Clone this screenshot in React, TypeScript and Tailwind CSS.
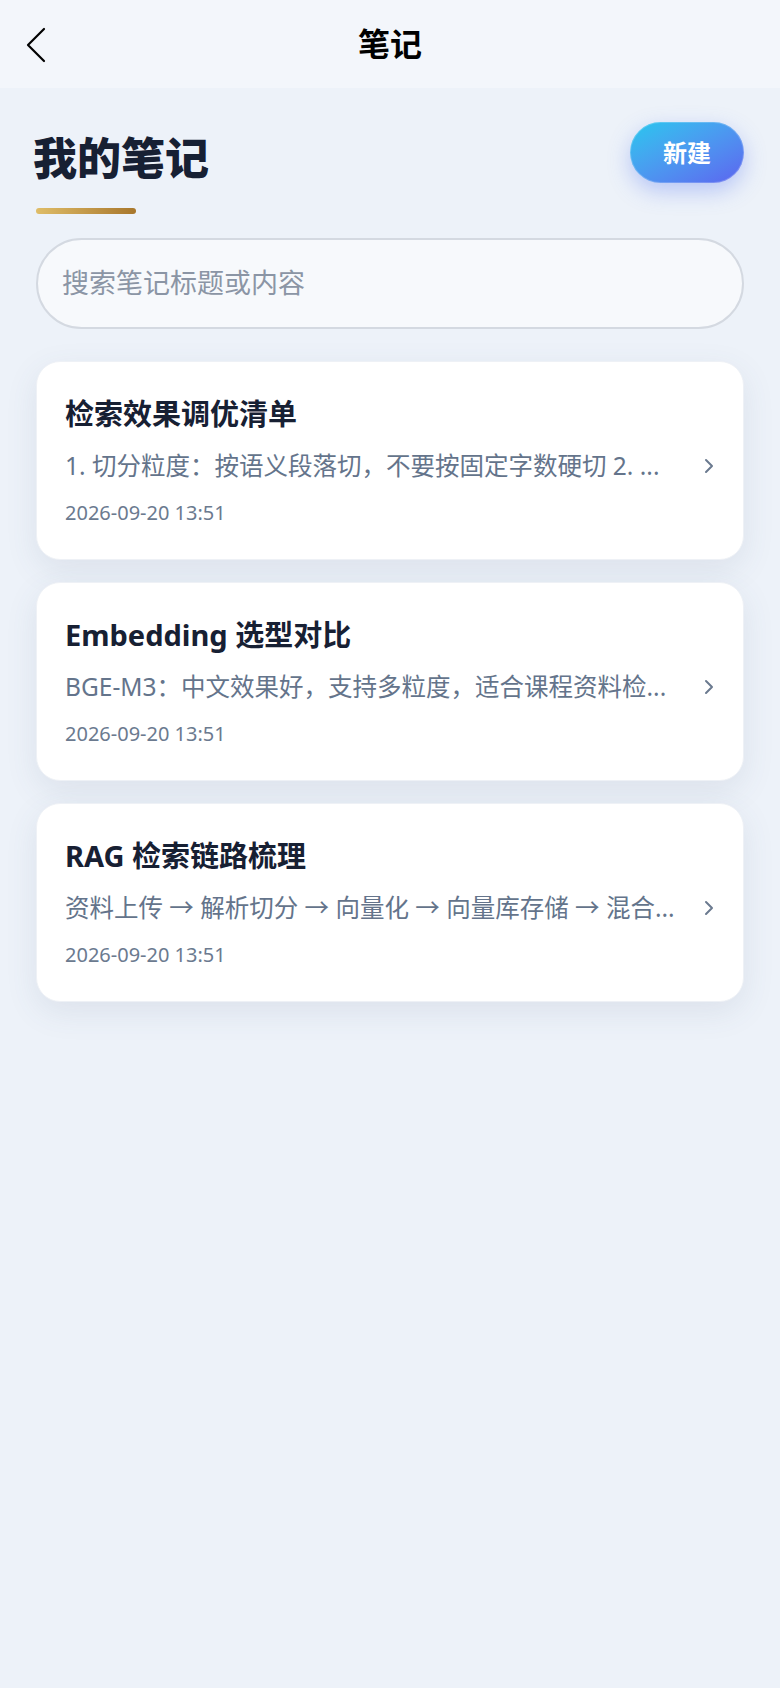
const notes = [
  {
    id: 1,
    title: "检索效果调优清单",
    preview: "1. 切分粒度：按语义段落切，不要按固定字数硬切 2. ...",
    time: "2026-09-20 13:51",
  },
  {
    id: 2,
    title: "Embedding 选型对比",
    preview: "BGE-M3：中文效果好，支持多粒度，适合课程资料检...",
    time: "2026-09-20 13:51",
  },
  {
    id: 3,
    title: "RAG 检索链路梳理",
    preview: "资料上传 → 解析切分 → 向量化 → 向量库存储 → 混合...",
    time: "2026-09-20 13:51",
  },
];

function BackIcon() {
  return (
    <svg width="22" height="36" viewBox="0 0 22 36" fill="none">
      <path d="M19 2 L3 18 L19 34" stroke="#000" strokeWidth="2.2" strokeLinecap="round" strokeLinejoin="round" />
    </svg>
  );
}

function SmallChevron() {
  return (
    <svg width="12" height="16" viewBox="0 0 12 16" fill="none">
      <path d="M3 2 L9 8 L3 14" stroke="#6b7a8f" strokeWidth="2" strokeLinecap="round" strokeLinejoin="round" />
    </svg>
  );
}

function NoteCard({ title, preview, time }: { title: string; preview: string; time: string }) {
  return (
    <div className="bg-white rounded-[24px] px-7 pt-8 pb-8 shadow-[0_10px_32px_rgba(71,85,120,0.10)] border border-[#eef1f6]">
      <div className="text-[29px] leading-[40px] font-bold text-[#172033]">{title}</div>
      <div className="mt-[14px] flex items-center justify-between gap-4">
        <div className="min-w-0 whitespace-nowrap text-[24.5px] leading-[36px] text-[#64748b]">{preview}</div>
        <SmallChevron />
      </div>
      <div className="mt-[15px] text-[20px] leading-[28px] text-[#6b7a8f]">{time}</div>
    </div>
  );
}

export default function App() {
  return (
    <div
      className="min-h-[1688px] bg-[#edf2f9]"
      style={{ fontFamily: '"Noto Sans", "Noto Sans CJK SC", sans-serif' }}
    >
      <header className="h-[88px] bg-[#f3f6fb] relative flex items-center justify-center">
        <button className="absolute left-[25px] top-[27px]">
          <BackIcon />
        </button>
        <h2 className="text-[32px] font-bold text-black leading-none">笔记</h2>
      </header>

      <main className="px-9 pt-[34px]">
        <div className="flex items-start justify-between">
          <div>
            <h1 className="mt-[9px] -ml-[3px] text-[44px] leading-[55px] font-extrabold text-[#172033]">我的笔记</h1>
            <div className="mt-[22px] h-[6px] w-[100px] rounded-full bg-gradient-to-r from-[#dfbd68] to-[#a8772c]" />
          </div>
          <button className="w-[114px] h-[61px] rounded-full bg-gradient-to-br from-[#22c7ee] to-[#5b63ef] text-white text-[24px] font-bold shadow-[0_8px_22px_rgba(79,116,240,0.35)] ring-1 ring-inset ring-white/20">
            新建
          </button>
        </div>

        <div className="mt-6 h-[91px] rounded-full border-2 border-[#d4d9e1] bg-[#f7f9fc] flex items-center px-[24px]">
          <input
            className="w-full bg-transparent outline-none text-[27px] text-[#334155] placeholder:text-[#8b95a5]"
            placeholder="搜索笔记标题或内容"
          />
        </div>

        <div className="mt-8 flex flex-col gap-[22px]">
          {notes.map((n) => (
            <NoteCard key={n.id} title={n.title} preview={n.preview} time={n.time} />
          ))}
        </div>
      </main>
    </div>
  );
}
